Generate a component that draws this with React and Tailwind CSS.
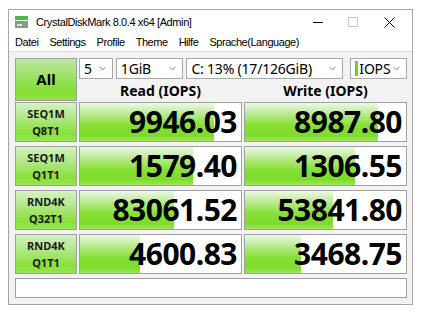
import { ChevronDown } from "lucide-react";

const rows = [
  { a: "SEQ1M", b: "Q8T1", read: "9946.03", write: "8987.80", rw: 134, ww: 133 },
  { a: "SEQ1M", b: "Q1T1", read: "1579.40", write: "1306.55", rw: 113, ww: 110 },
  { a: "RND4K", b: "Q32T1", read: "83061.52", write: "53841.80", rw: 94, ww: 88 },
  { a: "RND4K", b: "Q1T1", read: "4600.83", write: "3468.75", rw: 60, ww: 56 },
];

const ui = { fontFamily: '"Noto Sans", "Liberation Sans", sans-serif' };
const win = { fontFamily: '"Liberation Sans", Arial, sans-serif' };

function Combo({ width, children, bar }) {
  return (
    <div
      className={`${width} h-[21px] bg-white border border-[#a8a8a8] flex items-center pl-[4px] pr-[4px] text-[14px] text-black`}
    >
      {bar && <span className="w-[3px] h-[15px] bg-[#6ad41e] mr-[1px]"></span>}
      <span className="flex-1 leading-none whitespace-nowrap tracking-[-0.2px]">{children}</span>
      <ChevronDown size={11} strokeWidth={1.5} className="text-[#555]" />
    </div>
  );
}

function Meter({ value, width }) {
  return (
    <div className="relative h-full bg-white border border-[#a0a0a0] overflow-hidden">
      <div
        className="absolute left-0 top-0 bottom-0 bg-[linear-gradient(to_bottom,#eef8e8_0%,#b8ea8c_30%,#86e034_60%,#7ddc2a_85%,#9ee45e_100%)]"
        style={{ width }}
      ></div>
      <div className="relative h-full flex items-center justify-end pr-[4px] text-[30px] font-bold text-black leading-none tracking-[-0.5px]">
        {value}
      </div>
    </div>
  );
}

function Label({ a, b }) {
  return (
    <div className="h-full border border-[#a0a0a0] bg-[linear-gradient(to_bottom,#d6f2c4_0%,#b0e884_40%,#88e03a_80%,#9ae454_100%)] flex flex-col items-center justify-center text-[11px] font-bold text-[#1a1a1a] leading-[17px]">
      <span>{a}</span>
      <span>{b}</span>
    </div>
  );
}

export default function App() {
  return (
    <div className="w-[422px] h-[317px] bg-white pt-[9px] pl-[8px]" style={ui}>
      <div className="w-[405px] h-[296px] border border-[#a6a6a6] bg-[#f3f3f3] flex flex-col">
        {/* title bar */}
        <div className="h-[24px] bg-white flex items-center pl-[6px] pr-[5px] text-[11px] text-black tracking-[-0.4px]" style={win}>
          <svg width="13" height="12" viewBox="0 0 13 12">
            <rect x="0" y="0" width="13" height="4" fill="#4cb848" />
            <rect x="0" y="5" width="13" height="7" fill="#8a9a8a" />
            <rect x="2" y="8" width="5" height="2" fill="#d8e8d8" />
          </svg>
          <span className="ml-[8px]">CrystalDiskMark 8.0.4 x64 [Admin]</span>
          <div className="ml-auto flex items-center h-full">
            <div className="w-[34px] flex justify-center">
              <span className="w-[10px] h-[1px] bg-black"></span>
            </div>
            <div className="w-[36px] flex justify-center">
              <span className="w-[10px] h-[10px] border border-[#c8c8c8]"></span>
            </div>
            <div className="w-[36px] flex justify-center">
              <svg width="11" height="11" viewBox="0 0 11 11">
                <path d="M0.5 0.5 L10.5 10.5 M10.5 0.5 L0.5 10.5" stroke="#000" strokeWidth="1" />
              </svg>
            </div>
          </div>
        </div>
        {/* menu */}
        <div className="h-[18px] bg-white border-b border-[#dadada] flex items-center pl-[6px] gap-[11px] text-[11px] text-black tracking-[-0.45px]" style={win}>
          <span>Datei</span>
          <span>Settings</span>
          <span>Profile</span>
          <span>Theme</span>
          <span>Hilfe</span>
          <span>Sprache(Language)</span>
        </div>
        {/* client */}
        <div className="flex-1 pt-[6px] pl-[6px] pr-[5px] flex flex-col">
          <div className="grid grid-cols-[62px_163px_163px] gap-x-[2px] h-[43px]">
            <div className="border border-[#a0a0a0] bg-[linear-gradient(to_bottom,#bfe8a0_0%,#9ee26c_40%,#82de30_80%,#92e24a_100%)] flex items-center justify-center text-[15px] font-bold text-black">
              All
            </div>
            <div className="col-span-2 flex flex-col">
              <div className="flex gap-[3px]">
                <Combo width="w-[34px]">5</Combo>
                <Combo width="w-[68px]">1GiB</Combo>
                <Combo width="w-[158px]">C: 13% (17/126GiB)</Combo>
                <div className="w-[1px]"></div>
                <Combo width="w-[57px]" bar>IOPS</Combo>
              </div>
              <div className="flex-1 grid grid-cols-2 gap-x-[2px] items-center text-[14px] font-bold text-black">
                <div className="text-center">Read (IOPS)</div>
                <div className="text-center">Write (IOPS)</div>
              </div>
            </div>
          </div>
          <div className="mt-[1px] flex flex-col gap-[4px]">
            {rows.map((r, i) => (
              <div key={i} className="grid grid-cols-[62px_163px_163px] gap-x-[2px] h-[40px]">
                <Label a={r.a} b={r.b} />
                <Meter value={r.read} width={r.rw} />
                <Meter value={r.write} width={r.ww} />
              </div>
            ))}
            <div className="h-[20px] bg-white border border-[#a0a0a0]"></div>
          </div>
        </div>
      </div>
    </div>
  );
}
